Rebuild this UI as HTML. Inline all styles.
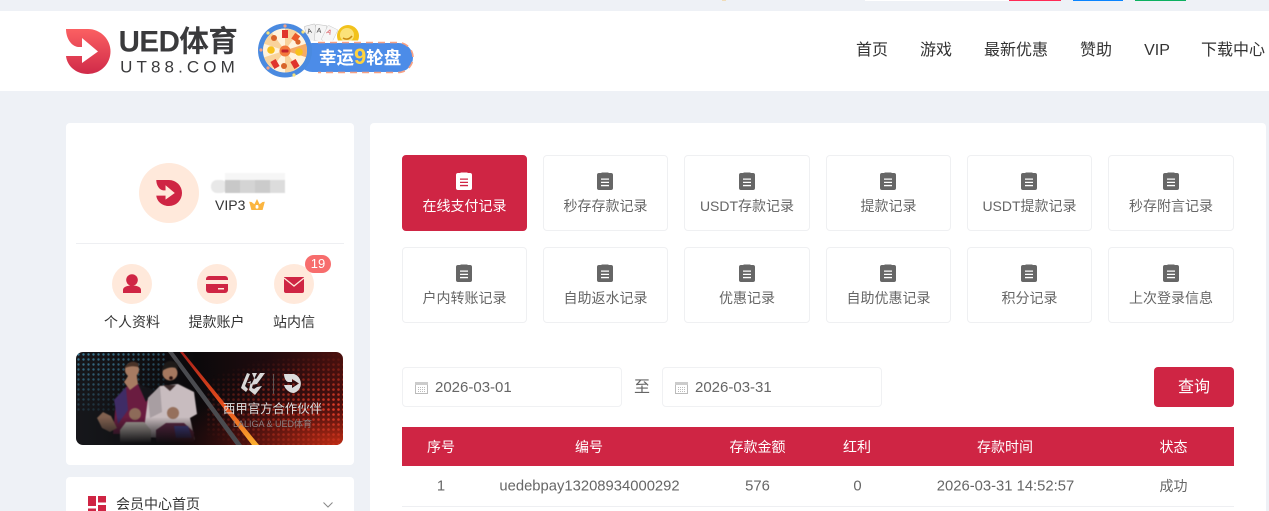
<!DOCTYPE html>
<html lang="zh"><head><meta charset="utf-8"><title>UED体育</title>
<style>
*{box-sizing:border-box}
html,body{margin:0;padding:0;width:1269px;height:511px;overflow:hidden}
body{background:#eef1f6;font-family:"Liberation Sans","Noto Sans CJK SC",sans-serif;color:#333}
#p{position:relative;width:1269px;height:511px;overflow:hidden;background:#eef1f6}
.a{position:absolute}
.t{position:absolute;white-space:nowrap;text-align:center;transform:translate(-50%,-50%);line-height:1}
.nav{font-size:16px;color:#333;top:51px}
.card{position:absolute;width:125px;height:76px;background:#fff;border:1px solid #eff0f2;border-radius:4px;color:#666;font-size:14px}
.card.on{background:#cf2544;border-color:#cf2544;color:#fff}
.card svg{position:absolute;left:53px;top:16px;width:16px;height:18px;fill:currentColor}
.card.w{width:126px}
.card.w svg{left:54px}
.card span{position:absolute;left:-10px;right:-10px;top:43px;text-align:center;line-height:14px;white-space:nowrap}
.input{position:absolute;top:367px;width:220px;height:40px;background:#fff;border:1px solid #f0f1f3;border-radius:4px}
.input svg{position:absolute;left:12px;top:13px}
.input span{position:absolute;left:32px;top:12px;font-size:15px;line-height:16px;color:#666}
.th{color:#fff;font-size:14px;top:447px}
.td{color:#666;font-size:14.8px;top:487px}
.lbl{font-size:14px;color:#333;top:322px}
</style></head><body><div id="p">
<div class="a" style="left:722px;top:0;width:4px;height:1px;background:#f0dcb8"></div>
<div class="a" style="left:865px;top:0;width:144px;height:1px;background:#fff"></div>
<div class="a" style="left:1009px;top:0;width:52px;height:1px;background:#ff2a55"></div>
<div class="a" style="left:1073px;top:0;width:50px;height:1px;background:#0a84ff"></div>
<div class="a" style="left:1135px;top:0;width:51px;height:1px;background:#0cb060"></div>
<div class="a" style="left:0;top:11px;width:1269px;height:80px;background:#fff"></div>

<svg class="a" style="left:0;top:0" width="120" height="91" viewBox="0 0 120 91">
<defs><linearGradient id="lg" x1="0" y1="0" x2="0" y2="1"><stop offset="0" stop-color="#fb6062"/><stop offset="1" stop-color="#d02a49"/></linearGradient></defs>
<path fill="url(#lg)" d="M66 29H88A22.5 22.5 0 0 1 88 74C76 74 67 66 66 56H82V63L98 51.5 82 38V47H78C71 46 66 38 66 29Z"/>
</svg>
<div class="t" style="left:178px;top:42px;font-size:29.5px;font-weight:700;color:#3a3a3c;letter-spacing:-.5px">UED体育</div>
<div class="t" style="left:179.5px;top:67px;font-size:17px;color:#3a3a3c;letter-spacing:4.1px">UT88.COM</div>

<svg class="a" style="left:250px;top:15px" width="170" height="70" viewBox="250 15 170 70" font-family="Liberation Sans,Noto Sans CJK SC,sans-serif">
<defs><path id="w" d="M0 0L0-22A22 22 0 0 1 12.9-17.8Z"/></defs>
<g transform="rotate(-14 311 33)"><rect x="306" y="25" width="11" height="16" rx="1" fill="#f1f1f1" stroke="#bbb" stroke-width=".5"/><text x="307.500" y="33" font-size="7" fill="#444">A</text></g>
<g transform="rotate(6 321 33)"><rect x="315" y="25" width="11" height="16" rx="1" fill="#f6f6f6" stroke="#bbb" stroke-width=".5"/><text x="316.500" y="33" font-size="7" fill="#444">A</text></g>
<g transform="rotate(26 330 35)"><rect x="324" y="27" width="11" height="16" rx="1" fill="#f6f6f6" stroke="#ccc" stroke-width=".5"/><text x="325.500" y="35" font-size="7" fill="#d8434a">A</text></g>
<circle cx="348" cy="36" r="11" fill="#f2c21c"/><circle cx="347" cy="35" r="7" fill="#fbe27a"/><path d="M343 38q5 3 9-2" fill="none" stroke="#c98a12" stroke-width="1.500"/>
<rect x="296" y="40.500" width="119" height="33" rx="16" fill="#fff"/>
<rect x="298" y="43" width="115" height="29" rx="14.500" fill="#4c8ce8"/>
<path d="M318 42.500H398a15 15 0 0 1 15 15V58a15 15 0 0 1-15 14.500H318" fill="none" stroke="#f7a184" stroke-width="1.600" stroke-dasharray="7 5"/>
<text x="319" y="64" font-size="17.500" font-weight="700" fill="#fff">幸运<tspan fill="#ffd23e" font-size="22">9</tspan><tspan>轮盘</tspan></text>
<circle cx="285" cy="50.500" r="27" fill="#4a8ae0"/>
<circle cx="285" cy="50.500" r="22" fill="#fde8c4"/>
<g transform="translate(285 50.500)">
<use href="#w" fill="#f9d39c"/><use href="#w" fill="#fff3dd" transform="rotate(36)"/><use href="#w" fill="#f5ab66" transform="rotate(72)"/><use href="#w" fill="#fff3dd" transform="rotate(108)"/><use href="#w" fill="#f9d39c" transform="rotate(144)"/><use href="#w" fill="#fff3dd" transform="rotate(180)"/><use href="#w" fill="#f9d39c" transform="rotate(216)"/><use href="#w" fill="#fff3dd" transform="rotate(252)"/><use href="#w" fill="#f9d39c" transform="rotate(288)"/><use href="#w" fill="#fff3dd" transform="rotate(324)"/>
</g>
<rect x="282" y="30" width="6" height="8" fill="#e0342c"/><rect x="293" y="34" width="6" height="7" fill="#ea5a2b" transform="rotate(35 296 37)"/>
<rect x="272" y="60" width="6" height="8" fill="#e0342c" transform="rotate(-30 275 64)"/><rect x="292" y="60" width="6" height="8" fill="#e0342c" transform="rotate(-30 295 64)"/>
<circle cx="271" cy="50" r="3.800" fill="#f7c11d"/><circle cx="299" cy="52" r="3.800" fill="#f7c11d"/>
<circle cx="274" cy="38" r="3" fill="#d8642a"/><circle cx="298" cy="42" r="2.600" fill="#d8642a"/><circle cx="284" cy="66" r="3" fill="#d8642a"/>
<circle cx="285" cy="51" r="5.500" fill="#f3793c"/><rect x="281.500" y="49.500" width="7" height="3" rx="1" fill="#c4242c"/>
<g fill="#f3a184"><circle cx="285" cy="26" r="1.600"/><circle cx="261" cy="50" r="1.600"/><circle cx="268" cy="68" r="1.600"/></g>
<g fill="#f6e27c"><circle cx="268" cy="33" r="1.600"/><circle cx="303" cy="32" r="1.600"/><circle cx="294" cy="75" r="1.600"/></g>
</svg>

<div class="t nav" style="left:872px">首页</div>
<div class="t nav" style="left:936px">游戏</div>
<div class="t nav" style="left:1016px">最新优惠</div>
<div class="t nav" style="left:1096px">赞助</div>
<div class="t nav" style="left:1157px">VIP</div>
<div class="t nav" style="left:1233px">下载中心</div>

<div class="a" style="left:66px;top:123px;width:288px;height:342px;background:#fff;border-radius:4px"></div>
<div class="a" style="left:66px;top:477px;width:288px;height:34px;background:#fff;border-radius:4px 4px 0 0"></div>
<div class="a" style="left:370px;top:123px;width:896px;height:388px;background:#fff;border-radius:4px 4px 0 0"></div>

<div class="a" style="left:139px;top:163px;width:60px;height:60px;border-radius:50%;background:#ffe9db"></div>
<svg class="a" style="left:156px;top:180px" width="26" height="26" viewBox="66 29 44 45"><path fill="#cf2544" d="M66 29H88A22.500 22.500 0 0 1 88 74C76 74 67 66 66 56H82V63L98 51.500 82 38V47H78C71 46 66 38 66 29Z"/></svg>
<div class="a" style="left:211px;top:173px;width:74px;height:21px;overflow:hidden;filter:blur(.6px)">
<div class="a" style="left:0;top:7px;width:16px;height:13px;background:#e8e8e8;border-radius:6px"></div>
<div class="a" style="left:14px;top:0;width:60px;height:7px;background:#f6f6f6"></div>
<div class="a" style="left:14px;top:7px;width:15px;height:13px;background:#c8c8c8"></div>
<div class="a" style="left:29px;top:7px;width:15px;height:13px;background:#d4d4d4"></div>
<div class="a" style="left:44px;top:7px;width:15px;height:13px;background:#cbcbcb"></div>
<div class="a" style="left:59px;top:7px;width:15px;height:13px;background:#dcdcdc"></div>
</div>
<div class="a" style="left:215px;top:197px;font-size:14px;line-height:16px;color:#333">VIP3</div>
<svg class="a" style="left:249px;top:199px" width="16" height="13" viewBox="0 0 16 13"><path fill="#fbb540" d="M8 0L10.600 5.200 13.500 3 15.800 2.800 13.600 11H2.400L.2 2.800 2.500 3 5.400 5.200Z"/><rect x="6.600" y="6" width="2.800" height="3.600" rx="1" fill="#fff"/></svg>
<div class="a" style="left:76px;top:243px;width:268px;height:1px;background:#eeeff2"></div>

<div class="a" style="left:112px;top:264px;width:40px;height:40px;border-radius:50%;background:#ffe9db"></div>
<div class="a" style="left:197px;top:264px;width:40px;height:40px;border-radius:50%;background:#ffe9db"></div>
<div class="a" style="left:274px;top:264px;width:40px;height:40px;border-radius:50%;background:#ffe9db"></div>
<svg class="a" style="left:112px;top:264px" width="40" height="40" viewBox="0 0 40 40"><circle cx="20" cy="16" r="5.800" fill="#cf2544"/><path fill="#cf2544" d="M11 29v-3c0-3 4-4.500 9-4.500s9 1.500 9 4.500v3z"/></svg>
<svg class="a" style="left:197px;top:264px" width="40" height="40" viewBox="0 0 40 40"><rect x="9" y="12" width="22" height="17" rx="3" fill="#cf2544"/><rect x="9" y="16" width="22" height="4" fill="#ffe9db"/><rect x="21" y="24" width="6" height="1.500" fill="#ffe9db"/></svg>
<svg class="a" style="left:274px;top:264px" width="40" height="40" viewBox="0 0 40 40"><path fill="#cf2544" d="M10 13h20v14a2 2 0 0 1-2 2H12a2 2 0 0 1-2-2z"/><path fill="none" stroke="#ffe9db" stroke-width="1.300" d="M10 14l10 8 10-8"/></svg>
<div class="a" style="left:305px;top:255px;width:26px;height:18px;border-radius:9px;background:#f76d6d;color:#fff;font-size:13px;line-height:18px;text-align:center">19</div>
<div class="t lbl" style="left:132px">个人资料</div>
<div class="t lbl" style="left:216.500px">提款账户</div>
<div class="t lbl" style="left:294px">站内信</div>

<svg class="a" style="left:76px;top:352px;border-radius:7px" width="267" height="93" viewBox="0 0 267 93" font-family="Liberation Sans,Noto Sans CJK SC,sans-serif">
<defs>
<linearGradient id="bg" x1="0" x2="1"><stop offset="0" stop-color="#16171b"/><stop offset=".45" stop-color="#0b090b"/><stop offset=".72" stop-color="#200b0e"/><stop offset="1" stop-color="#4a100e"/></linearGradient>
<radialGradient id="rg" cx="1" cy="1" r=".7"><stop offset="0" stop-color="#c02c14"/><stop offset=".55" stop-color="#5a120e" stop-opacity=".7"/><stop offset="1" stop-color="#200a0c" stop-opacity="0"/></radialGradient>
<pattern id="dr" width="5" height="5" patternUnits="userSpaceOnUse"><circle cx="2.500" cy="2.500" r="1.300" fill="#e8402a"/></pattern>
<pattern id="db" width="5" height="5" patternUnits="userSpaceOnUse"><circle cx="2.500" cy="2.500" r="1.200" fill="#3d7f9c"/></pattern>
<linearGradient id="fd" x1="0" y1="0" x2="1" y2="1"><stop offset="0" stop-color="#fff"/><stop offset=".45" stop-color="#000"/></linearGradient>
<mask id="mb"><rect width="267" height="93" fill="url(#fd)"/></mask>
<radialGradient id="fr" cx="1" cy=".6" r=".6"><stop offset="0" stop-color="#fff"/><stop offset="1" stop-color="#000"/></radialGradient>
<mask id="mr"><rect width="267" height="93" fill="url(#fr)"/></mask>
<linearGradient id="fb" x1="0" y1="0" x2="0" y2="1"><stop offset=".7" stop-color="#fff"/><stop offset=".98" stop-color="#000"/></linearGradient>
<mask id="mp"><rect width="267" height="93" fill="url(#fb)"/></mask>
<linearGradient id="st" x1="0" y1="0" x2="0" y2="1"><stop offset="0" stop-color="#a8201a"/><stop offset=".6" stop-color="#e8501c"/><stop offset="1" stop-color="#fbb030"/></linearGradient>
</defs>
<rect width="267" height="93" fill="url(#bg)"/><rect width="267" height="93" fill="url(#rg)"/>
<rect width="90" height="60" fill="url(#db)" mask="url(#mb)"/>
<rect x="130" width="137" height="93" fill="url(#dr)" mask="url(#mr)"/>
<path d="M92 0L160 93H166L97 0Z" fill="#4a4b4f"/>
<path d="M104 0L176 93H183L107 0Z" fill="url(#st)"/>
<g mask="url(#mp)" style="filter:blur(.6px)">
<path d="M37 82L40 48 50 35 62 32 76 38 70 82Z" fill="#6a1c40"/><path d="M38 48L50 35 52 58 42 72Z" fill="#3f2c66"/><path d="M62 32L78 38 70 50Z" fill="#15151a"/>
<path d="M48 30q6-8 6-12h6l2 14-8 6z" fill="#a77b62"/>
<circle cx="56" cy="18" r="7" fill="#a77b62"/><path d="M49 15q6-9 14-3l-1 3q-6-2-13 1z" fill="#4a3328"/>
<path d="M67 85L72 46 84 34 102 32 118 40 121 62 114 66 119 88Z" fill="#c8bcbf"/><path d="M87 33h13l-6 6z" fill="#3b2a2a"/>
<path d="M72 46L84 34 86 60 74 66Z" fill="#a89ea2"/>
<circle cx="94" cy="21" r="7.500" fill="#a5785f"/><path d="M86 19q1-10 9-10 8 1 7 8-7-4-16 2z" fill="#1e1a18"/><circle cx="95" cy="26" r="1.800" fill="#2a1210"/>
<path d="M44 93V78L50 70H68L75 78V93Z" fill="#a8a19a"/><circle cx="59" cy="62" r="6" fill="#8d6b59"/>
<path d="M80 93V78L90 71H108L118 80V93Z" fill="#5a2743"/><path d="M98 74H112L116 86H100Z" fill="#3e3f86"/><circle cx="97" cy="61" r="6" fill="#96705c"/>
<path d="M21 66l6-6 8 4 6 12-7 4-8-4z" fill="#80604f"/>
</g>
<path fill="#d8d8d8" d="M176 21h5l-6 12 6-1 8-11h-5l-4 6-2-1zM171 31l4-2-2 9 6 5 7-9-5 1-3 2-2-1 1-4-4-1zM166 33l5-12 3 1-5 12 3 3-2 3-5-4z"/>
<rect x="197" y="22" width=".8" height="20" fill="#666"/>
<path fill="#dcdcdc" d="M208 22H218A10 10 0 0 1 218 41C213 41 209 37 208 33H216V36L223 31.500 216 27V30H212C210 29.500 208 26 208 22Z"/>
<text x="196.500" y="61" text-anchor="middle" font-size="12.400" fill="#ddd">西甲官方合作伙伴</text>
<text x="196.500" y="75" text-anchor="middle" font-size="9" fill="#8a7f80">LALIGA &amp; UED体育</text>
</svg>

<svg class="a" style="left:88px;top:496px" width="18" height="15" viewBox="0 0 18 15"><g fill="#cf2544"><rect x="0" y="0" width="8" height="10"/><rect x="10" y="0" width="8" height="6.500"/><rect x="10" y="9" width="8" height="6"/><rect x="0" y="12.500" width="8" height="2.500"/></g></svg>
<div class="a" style="left:116px;top:495px;height:16px;overflow:hidden;font-size:14px;line-height:19px;color:#333;white-space:nowrap">会员中心首页</div>
<svg class="a" style="left:322px;top:501px" width="12" height="8" viewBox="0 0 12 8"><path d="M1.500 1.500L6 6 10.500 1.500" fill="none" stroke="#888" stroke-width="1"/></svg>

<div class="card on" style="left:402px;top:155px"><svg viewBox="0 0 16 18"><path fill-rule="evenodd" d="M2 1H4.500V.5H11.500V1H14a2 2 0 0 1 2 2V16a2 2 0 0 1-2 2H2a2 2 0 0 1-2-2V3a2 2 0 0 1 2-2ZM4 6.500h8v1.300H4zM4 9.700h8v1.300H4zM4 12.900h8v1.300H4z"/></svg><span>在线支付记录</span></div>
<div class="card" style="left:543px;top:155px"><svg viewBox="0 0 16 18"><path fill-rule="evenodd" d="M2 1H4.500V.5H11.500V1H14a2 2 0 0 1 2 2V16a2 2 0 0 1-2 2H2a2 2 0 0 1-2-2V3a2 2 0 0 1 2-2ZM4 6.500h8v1.300H4zM4 9.700h8v1.300H4zM4 12.900h8v1.300H4z"/></svg><span>秒存存款记录</span></div>
<div class="card w" style="left:684px;top:155px"><svg viewBox="0 0 16 18"><path fill-rule="evenodd" d="M2 1H4.500V.5H11.500V1H14a2 2 0 0 1 2 2V16a2 2 0 0 1-2 2H2a2 2 0 0 1-2-2V3a2 2 0 0 1 2-2ZM4 6.500h8v1.300H4zM4 9.700h8v1.300H4zM4 12.900h8v1.300H4z"/></svg><span>USDT存款记录</span></div>
<div class="card" style="left:826px;top:155px"><svg viewBox="0 0 16 18"><path fill-rule="evenodd" d="M2 1H4.500V.5H11.500V1H14a2 2 0 0 1 2 2V16a2 2 0 0 1-2 2H2a2 2 0 0 1-2-2V3a2 2 0 0 1 2-2ZM4 6.500h8v1.300H4zM4 9.700h8v1.300H4zM4 12.900h8v1.300H4z"/></svg><span>提款记录</span></div>
<div class="card" style="left:967px;top:155px"><svg viewBox="0 0 16 18"><path fill-rule="evenodd" d="M2 1H4.500V.5H11.500V1H14a2 2 0 0 1 2 2V16a2 2 0 0 1-2 2H2a2 2 0 0 1-2-2V3a2 2 0 0 1 2-2ZM4 6.500h8v1.300H4zM4 9.700h8v1.300H4zM4 12.900h8v1.300H4z"/></svg><span>USDT提款记录</span></div>
<div class="card w" style="left:1108px;top:155px"><svg viewBox="0 0 16 18"><path fill-rule="evenodd" d="M2 1H4.500V.5H11.500V1H14a2 2 0 0 1 2 2V16a2 2 0 0 1-2 2H2a2 2 0 0 1-2-2V3a2 2 0 0 1 2-2ZM4 6.500h8v1.300H4zM4 9.700h8v1.300H4zM4 12.900h8v1.300H4z"/></svg><span>秒存附言记录</span></div>
<div class="card" style="left:402px;top:247px"><svg viewBox="0 0 16 18"><path fill-rule="evenodd" d="M2 1H4.500V.5H11.500V1H14a2 2 0 0 1 2 2V16a2 2 0 0 1-2 2H2a2 2 0 0 1-2-2V3a2 2 0 0 1 2-2ZM4 6.500h8v1.300H4zM4 9.700h8v1.300H4zM4 12.900h8v1.300H4z"/></svg><span>户内转账记录</span></div>
<div class="card" style="left:543px;top:247px"><svg viewBox="0 0 16 18"><path fill-rule="evenodd" d="M2 1H4.500V.5H11.500V1H14a2 2 0 0 1 2 2V16a2 2 0 0 1-2 2H2a2 2 0 0 1-2-2V3a2 2 0 0 1 2-2ZM4 6.500h8v1.300H4zM4 9.700h8v1.300H4zM4 12.900h8v1.300H4z"/></svg><span>自助返水记录</span></div>
<div class="card w" style="left:684px;top:247px"><svg viewBox="0 0 16 18"><path fill-rule="evenodd" d="M2 1H4.500V.5H11.500V1H14a2 2 0 0 1 2 2V16a2 2 0 0 1-2 2H2a2 2 0 0 1-2-2V3a2 2 0 0 1 2-2ZM4 6.500h8v1.300H4zM4 9.700h8v1.300H4zM4 12.900h8v1.300H4z"/></svg><span>优惠记录</span></div>
<div class="card" style="left:826px;top:247px"><svg viewBox="0 0 16 18"><path fill-rule="evenodd" d="M2 1H4.500V.5H11.500V1H14a2 2 0 0 1 2 2V16a2 2 0 0 1-2 2H2a2 2 0 0 1-2-2V3a2 2 0 0 1 2-2ZM4 6.500h8v1.300H4zM4 9.700h8v1.300H4zM4 12.900h8v1.300H4z"/></svg><span>自助优惠记录</span></div>
<div class="card" style="left:967px;top:247px"><svg viewBox="0 0 16 18"><path fill-rule="evenodd" d="M2 1H4.500V.5H11.500V1H14a2 2 0 0 1 2 2V16a2 2 0 0 1-2 2H2a2 2 0 0 1-2-2V3a2 2 0 0 1 2-2ZM4 6.500h8v1.300H4zM4 9.700h8v1.300H4zM4 12.900h8v1.300H4z"/></svg><span>积分记录</span></div>
<div class="card w" style="left:1108px;top:247px"><svg viewBox="0 0 16 18"><path fill-rule="evenodd" d="M2 1H4.500V.5H11.500V1H14a2 2 0 0 1 2 2V16a2 2 0 0 1-2 2H2a2 2 0 0 1-2-2V3a2 2 0 0 1 2-2ZM4 6.500h8v1.300H4zM4 9.700h8v1.300H4zM4 12.900h8v1.300H4z"/></svg><span>上次登录信息</span></div>

<div class="input" style="left:402px"><svg width="13" height="13" viewBox="0 0 13 13"><path fill="none" stroke="#bbb" d="M.5 1.500h12v11H.5z"/><rect x="0" y="1" width="13" height="3" fill="#ccc"/><path stroke="#bbb" stroke-dasharray="1 1" d="M3 6.500h7M3 8.500h7M3 10.500h7"/></svg><span>2026-03-01</span></div>
<div class="t" style="left:642px;top:388px;font-size:16px;color:#666">至</div>
<div class="input" style="left:662px"><svg width="13" height="13" viewBox="0 0 13 13"><path fill="none" stroke="#bbb" d="M.5 1.500h12v11H.5z"/><rect x="0" y="1" width="13" height="3" fill="#ccc"/><path stroke="#bbb" stroke-dasharray="1 1" d="M3 6.500h7M3 8.500h7M3 10.500h7"/></svg><span>2026-03-31</span></div>
<div class="a" style="left:1154px;top:367px;width:80px;height:40px;border-radius:4px;background:#cf2544;color:#fff;font-size:16px;line-height:41px;text-align:center">查询</div>

<div class="a" style="left:402px;top:427px;width:832px;height:39px;background:#cf2544"></div>
<div class="a" style="left:402px;top:466px;width:832px;height:41px;background:#fff;border-bottom:1px solid #eeeff2"></div>
<div class="t th" style="left:441px">序号</div>
<div class="t th" style="left:589px">编号</div>
<div class="t th" style="left:757.500px">存款金额</div>
<div class="t th" style="left:857px">红利</div>
<div class="t th" style="left:1005px">存款时间</div>
<div class="t th" style="left:1173.500px">状态</div>
<div class="t td" style="left:441px">1</div>
<div class="t td" style="left:589.500px">uedebpay13208934000292</div>
<div class="t td" style="left:757.500px">576</div>
<div class="t td" style="left:857.500px">0</div>
<div class="t td" style="left:1005.500px">2026-03-31 14:52:57</div>
<div class="t td" style="left:1173.500px;font-size:14px;top:486px">成功</div>
</div></body></html>
